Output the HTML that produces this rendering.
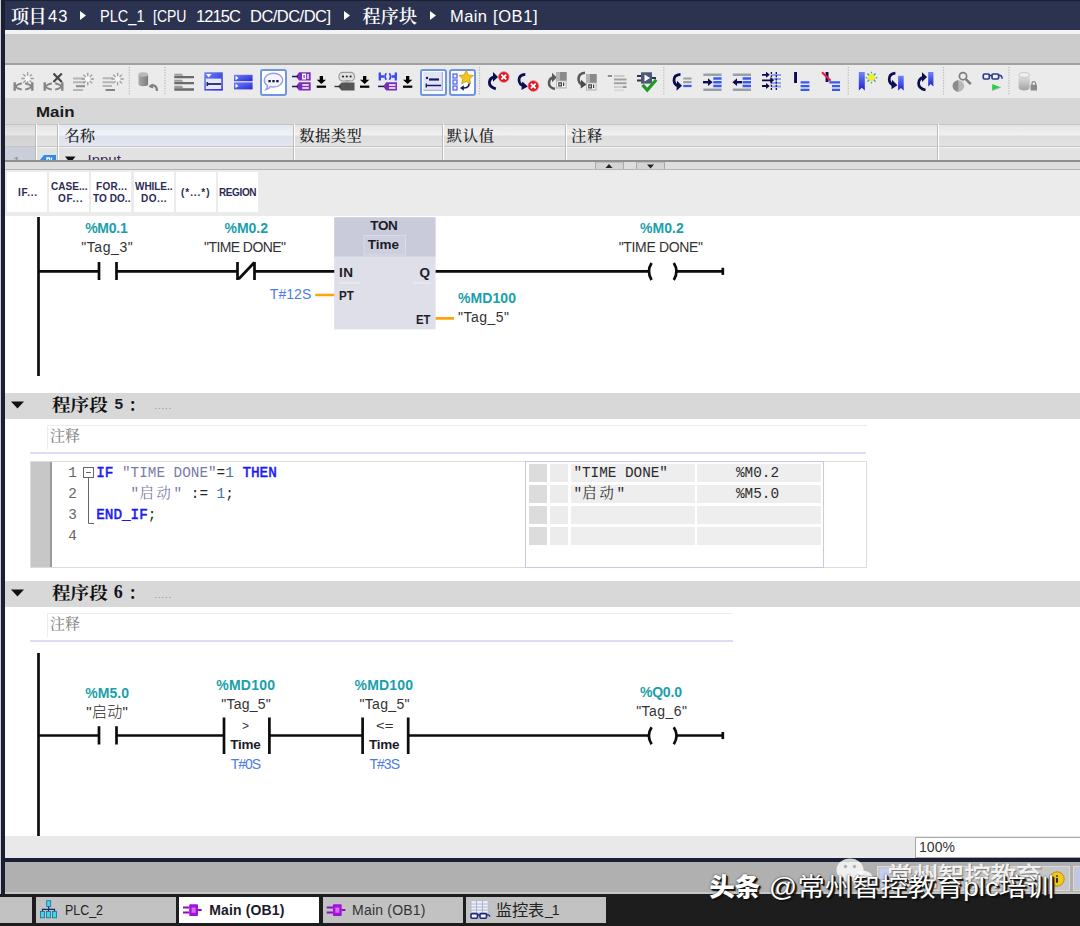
<!DOCTYPE html>
<html lang="zh-CN">
<head>
<meta charset="utf-8">
<title>Main [OB1]</title>
<style>
html,body{margin:0;padding:0;background:#fff;}
body{width:1080px;height:926px;overflow:hidden;position:relative;font-family:"Liberation Sans","Noto Sans CJK SC",sans-serif;color:#222;}
#root{position:absolute;left:0;top:0;width:1080px;height:926px;overflow:hidden;background:#fff;}
.abs{position:absolute;}
.t{position:absolute;white-space:pre;display:block;}
svg{position:absolute;overflow:visible;}
/* frame */
#titlebar{left:0;top:0;width:1080px;height:30px;background:#2c3350;border-top:1px solid #1b1f33;box-sizing:border-box;}
#band1{left:0;top:30px;width:1080px;height:35px;background:#cccccc;border-top:4px solid #f3f3f3;border-bottom:2px solid #a0a0a0;box-sizing:border-box;}
#toolbar{left:0;top:65px;width:1080px;height:33px;background:#ebebeb;}
#mainrow{left:0;top:98px;width:1080px;height:26px;background:#d7d7d7;}
#hdr{left:0;top:124px;width:1080px;height:23px;background:linear-gradient(#e4e4e4,#f1f1f1 45%,#dddddd 55%,#e3e3e3);border-top:1px solid #c4c4c4;border-bottom:1px solid #c6c6c6;box-sizing:border-box;}
#row1{left:0;top:147px;width:1080px;height:14px;background:#e2e2e2;border-top:1px solid #f3f3f3;box-sizing:border-box;}
#split{left:0;top:160px;width:1080px;height:10px;background:#dedede;border-top:2px solid #8f8f8f;border-bottom:1px solid #b5b5b5;box-sizing:border-box;}
#fav{left:0;top:170px;width:1080px;height:46px;background:#ebebeb;}
#leftedge{left:0;top:0;width:5px;height:894px;background:#1b1f33;border-left:1px solid #cfcfcf;box-sizing:border-box;}
.favb{position:absolute;top:172.200px;width:40px;height:39.800px;background:#fff;}
.vsep{position:absolute;top:124px;width:1px;height:36px;background:#fff;border-left:1px solid #bcbcbc;}
/* networks */
.nethdr{position:absolute;left:5px;width:1075px;height:26px;background:#d8d8d8;}
.cmt{position:absolute;left:47px;height:24px;border-top:1px solid #ececec;border-left:1px solid #ececec;box-sizing:border-box;}
.lav{position:absolute;left:30px;height:1.700px;background:#dcdcf5;}
/* bottom */
#botlight{left:5px;top:836px;width:1075px;height:22px;background:#e9e9e9;}
#botline{left:5px;top:858px;width:1075px;height:4px;background:#1b1f33;}
#botgray{left:5px;top:862px;width:1075px;height:32px;background:#b0b0b0;border-bottom:2px solid #c6c6c6;box-sizing:border-box;height:31.500px;}
#taskbar{left:0;top:894px;width:1080px;height:32px;background:#1d1d1d;}
.tab{position:absolute;top:897px;height:26px;background:#c2c2c2;}
</style>
</head>
<body>
<div id="root">
<!-- window frame -->
<div id="titlebar" class="abs"></div>
<div id="band1" class="abs"></div>
<div id="toolbar" class="abs"></div>
<div id="mainrow" class="abs"></div>
<div id="hdr" class="abs"></div>
<div id="row1" class="abs"></div>
<div id="split" class="abs"></div>
<div id="fav" class="abs"></div>
<svg width="1080" height="30" style="left:0;top:0"><g fill="#fff"><path d="M80 11l6 4.5-6 4.5z"/><path d="M344 11l6 4.5-6 4.5z"/><path d="M430 11l6 4.5-6 4.5z"/></g></svg>
<!-- interface table header -->
<div class="abs" style="left:5px;top:125px;width:30px;height:21px;background:linear-gradient(#dadada,#e6e6e6 45%,#d2d2d2 55%,#d8d8d8);"></div>
<div class="abs" style="left:58px;top:125px;width:236px;height:21px;background:linear-gradient(#e3e7ef,#f0f3f8 45%,#dde2ec 55%,#e2e6ee);"></div>
<div class="vsep" style="left:35px"></div>
<div class="vsep" style="left:57px"></div>
<div class="vsep" style="left:293px"></div>
<div class="vsep" style="left:442px"></div>
<div class="vsep" style="left:565px"></div>
<div class="vsep" style="left:937px"></div>
<div class="abs" style="left:5px;top:147px;width:30px;height:13px;background:#c9ced8;"></div>
<!-- splitter arrows -->
<div class="abs" style="left:595px;top:162px;width:29px;height:7px;background:#d4d4d4;border:1px solid #a9a9a9;border-top-color:#bdbdbd;border-bottom:none;box-sizing:border-box;"></div>
<div class="abs" style="left:636px;top:162px;width:29px;height:7px;background:#d4d4d4;border:1px solid #a9a9a9;border-top-color:#bdbdbd;border-bottom:none;box-sizing:border-box;"></div>
<svg width="80" height="8" style="left:590px;top:162px"><path d="M15.5 6l3.5-4 3.500 4z" fill="#222"/><path d="M57 2.500l3.500 4 3.500-4z" fill="#222"/></svg>
<!-- SCL favourites buttons -->
<div class="favb" style="left:7.200px"></div>
<div class="favb" style="left:49.300px"></div>
<div class="favb" style="left:91.400px"></div>
<div class="favb" style="left:133.500px"></div>
<div class="favb" style="left:175.600px"></div>
<div class="favb" style="left:217.700px"></div>
<!-- row 1 (clipped by splitter) -->
<div class="abs" style="left:5px;top:147px;width:1075px;height:13px;overflow:hidden;">
 <span class="t" style="left:8px;top:7px;font-size:13px;line-height:16px;color:#8d8d8d;">1</span>
 <svg width="18" height="12" style="left:34px;top:6.500px"><path d="M0.500 6.500L5 1h12v11H5z" fill="#2f8be6"/><path d="M8 4h2.500v5H8zM12.500 3.500v6" stroke="#fff" stroke-width="1.300" fill="none"/></svg>
 <svg width="14" height="8" style="left:59px;top:9px"><path d="M1 0.500h10.500L6.250 7z" fill="#111"/></svg>
 <span class="t" style="left:82.500px;top:4px;font-size:15px;line-height:18px;color:#3a2a5a;">Input</span>
</div>
<!-- toolbar icons -->
<div class="abs" style="left:260px;top:68.500px;width:27px;height:27px;background:#fff;border:2px solid #6e96e2;border-radius:3px;box-sizing:border-box;"></div>
<div class="abs" style="left:419.500px;top:68.500px;width:27px;height:27px;background:#fafbff;border:2px solid #6e96e2;border-radius:3px;box-sizing:border-box;"></div>
<div class="abs" style="left:449px;top:68.500px;width:27px;height:27px;background:#fafbff;border:2px solid #6e96e2;border-radius:3px;box-sizing:border-box;"></div>
<svg width="1080" height="34" viewBox="0 64 1080 34" style="left:0;top:64px">
<defs>
 <linearGradient id="gb" x1="0" y1="0" x2="1" y2="1"><stop offset="0" stop-color="#6f82f6"/><stop offset="1" stop-color="#2a2ad6"/></linearGradient>
 <linearGradient id="gbk" x1="0" y1="0" x2="0" y2="1"><stop offset="0" stop-color="#6f86fa"/><stop offset="1" stop-color="#1f1fcc"/></linearGradient>
 <linearGradient id="gcy" x1="0" y1="0" x2="1" y2="0"><stop offset="0" stop-color="#a9a9a9"/><stop offset="1" stop-color="#7b7b7b"/></linearGradient>
 <linearGradient id="gcy2" x1="0" y1="0" x2="0" y2="1"><stop offset="0" stop-color="#e4e4e4"/><stop offset="1" stop-color="#a4a4a4"/></linearGradient>
 <g id="burst"><circle r="3.600" fill="#f6f6f6"/><path d="M0-6.200V-2.800M0 2.800V6.200M-6.200 0H-2.800M2.800 0H6.200M-4.400-4.400L-2-2M2 2L4.400 4.400M-4.400 4.400L-2 2M2-2L4.400-4.400" stroke="#9c9c9c" stroke-width="1.300"/></g>
 <g id="contact" stroke="#858585" fill="none"><path d="M1.200 0V8.500M18.800 0V8.500" stroke-width="2.400"/><path d="M8.300 1.100Q-3.300 4.250 8.300 7.400M11.700 1.100Q23.300 4.250 11.700 7.400" stroke-width="2"/></g>
 <g id="dl" fill="#000"><path d="M3 0h3.300v3.800h3L4.650 8 0 3.800h3z"/><rect x="0" y="9.600" width="9.300" height="2.200"/></g>
 <g id="redx"><circle r="5.300" fill="#d81824"/><circle r="5.300" fill="none" stroke="#f06a70" stroke-width=".8"/><path d="M-2.400-2.400L2.400 2.400M2.400-2.400L-2.400 2.400" stroke="#fff" stroke-width="1.900"/></g>
 <g id="doc"><rect x="0" y="0" width="10.600" height="16.500" fill="#b4b4b4"/><rect x="4" y="0" width="6.600" height="8.500" fill="#8a8a8a"/><rect x="1" y="9.300" width="8.600" height="6" fill="#f2f2f2"/><path d="M2.800 10.800h2.600v3h-2.600zM7.600 10.500v3.600" stroke="#444" stroke-width="1.200" fill="none"/></g>
</defs>
<!-- 1-4 disabled insert icons -->
<use href="#contact" x="13.500" y="82.200"/><use href="#burst" x="27.600" y="78.500"/>
<use href="#contact" x="43.500" y="82.200"/><path d="M53.500 73.500L61.800 82M61.800 73.500L53.500 82" stroke="#474747" stroke-width="2.200"/>
<g stroke="#b5b5b5" stroke-width="2"><path d="M73 78.500H85M73 82.200H85M73 90H83"/><path d="M76 86.200H85" stroke="#8c8c8c"/></g><use href="#burst" x="87.800" y="79"/>
<g stroke="#b5b5b5" stroke-width="2"><path d="M102.600 78.300H113M102.600 82.200H113M102.600 86H112"/><path d="M105.500 90H115" stroke="#858585"/></g><use href="#burst" x="117.600" y="79"/>
<!-- separators -->
<g stroke="#bdbdbd" stroke-width="1.200" stroke-dasharray="1.300 1.300"><path d="M129.300 67V95M165 67V95M479.500 67V95M663.800 67V95M848.300 67V95M943.500 67V95M1008.900 67V95"/></g>
<!-- 5 cylinder+undo -->
<path d="M138.500 74.500v9.500a4.800 2.200 0 0 0 9.600 0v-9.500z" fill="url(#gcy)"/><ellipse cx="143.300" cy="74.500" rx="4.800" ry="2.200" fill="#b9b9b9"/>
<path d="M150 86.500Q156.500 83 157 91" fill="none" stroke="#7d7d7d" stroke-width="2.200"/><path d="M148.500 86.800l4-3.200.8 4.800z" fill="#7d7d7d"/>
<!-- 6 gray lines -->
<g fill="#9b9b9b"><path d="M174.300 73.800h7.500l1.500 2h-9z"/><path d="M174.300 79.800h7.500l1.500 2h-9z"/><path d="M174.300 85.800h7.500l1.500 2.300h-9z"/></g>
<g stroke="#6a6a6a" stroke-width="2.300"><path d="M174.300 77.200H194M174.300 83.200H194M174.300 89.500H194"/></g>
<!-- 7 open box -->
<rect x="204.300" y="72.300" width="18.500" height="18.300" fill="url(#gb)"/><rect x="205.800" y="78.600" width="15.500" height="10.400" fill="#e3e8fb"/><path d="M206 74h5.500l-2.750 3.400z" fill="#fff"/><path d="M207.300 84h13.800" stroke="#24245c" stroke-width="1.800"/><path d="M207.300 82v4" stroke="#24245c" stroke-width="1.600"/>
<!-- 8 collapsed -->
<rect x="234" y="74.800" width="18.600" height="6.400" fill="url(#gb)"/><rect x="234" y="82.400" width="18.600" height="7" fill="url(#gb)"/><path d="M235.500 75.800l3 2.200-3 2.200zM235.500 83.700l3 2.200-3 2.200z" fill="#fff"/>
<!-- 9 speech bubble -->
<path d="M273.500 73.300c5.200 0 9.200 2.900 9.200 6.800s-4 6.900-9.200 6.900c-1.200 0-2.200-.1-3.200-.4-1 1.700-2.500 2.700-4.300 3 1-1.100 1.500-2.500 1.400-3.900-1.900-1.300-3.100-3.300-3.100-5.600 0-3.900 4-6.800 9.200-6.800z" fill="#f4f4ff" stroke="#9c9cf0" stroke-width="1.500"/>
<g fill="#1a1a3a"><rect x="268.400" y="80" width="2.400" height="2.300"/><rect x="272.300" y="80" width="2.400" height="2.300"/><rect x="276.200" y="80" width="2.400" height="2.300"/></g>
<!-- 10 purple tags + download -->
<g fill="#7a2fb8"><path d="M296 76.500l3-4.200h11.700v8.300H299z"/><path d="M296 86.500l3-4.200h11.700v8.300H299z"/></g>
<path d="M292 76.500h6M292 86.500h6" stroke="#1a1a5a" stroke-width="1.500"/>
<g stroke="#fff" stroke-width="1.400" fill="none"><path d="M302.800 74.300h2.600v4.400h-2.600zM308 74v5M302.300 85h6.500M302.300 88h6.500"/></g>
<use href="#dl" x="316.700" y="76"/>
<!-- 11 gray bubble/tag + download -->
<rect x="339" y="72.300" width="15.500" height="8.700" rx="4" fill="#e2e2e2" stroke="#9a9a9a" stroke-width="1.200"/><path d="M349 80.500l-3.500 4 .5-4z" fill="#e2e2e2" stroke="#9a9a9a" stroke-width="1"/>
<g fill="#222"><circle cx="343" cy="76.500" r="1.100"/><circle cx="346.800" cy="76.500" r="1.100"/><circle cx="350.600" cy="76.500" r="1.100"/></g>
<path d="M338 86.500l3.500-4h13v8h-13z" fill="#555"/><path d="M334.500 86.500h6" stroke="#333" stroke-width="1.400"/>
<use href="#dl" x="360" y="76"/>
<!-- 12 blue contact + purple tag + download -->
<g stroke="#3a48f0" stroke-width="2.300" fill="none"><path d="M379.800 72.600V80.400M379.800 76.500H384M395.800 72.600V80.400M391.600 76.500H395.800"/><path d="M386.300 73.300Q383.800 76.500 386.300 79.700M389.300 73.300Q391.800 76.500 389.300 79.700" stroke-width="1.800"/></g>
<path d="M383.200 86.400l3-4.100H397v8.200h-10.800z" fill="#7a2fb8"/><path d="M378 86.400h6" stroke="#1a1a5a" stroke-width="1.500"/><path d="M389 85h6.500M389 88h6.500" stroke="#fff" stroke-width="1.400"/>
<use href="#dl" x="403" y="76"/>
<!-- 13 -->
<rect x="423.400" y="72" width="19" height="18.400" fill="#dfe4f8"/><path d="M442.400 72v18.400H423.400" fill="none" stroke="#aab1d6" stroke-width="1.200"/>
<circle cx="427" cy="78" r="1.200" fill="#1a1a5a"/><path d="M429 79.500h10" stroke="#1a1a5a" stroke-width="2.200"/><path d="M426.300 85.500h14.800M426.300 83.500v4" stroke="#1a1a5a" stroke-width="1.400"/>
<!-- 14 -->
<g fill="#eef0ff" stroke="#5a6ae6" stroke-width="1.300"><rect x="453" y="74" width="4" height="4"/><rect x="453" y="80" width="4" height="4"/><rect x="453" y="86" width="4" height="4"/></g>
<path d="M466.200 70.300l2.100 4.700 5.100.5-3.800 3.400 1.100 5-4.500-2.600-4.500 2.600 1.100-5-3.800-3.400 5.100-.5z" fill="#f2c41e" stroke="#c79a10" stroke-width=".8"/>
<path d="M469 83.500q.5 4.500-6 4.500" fill="none" stroke="#1a1a5a" stroke-width="1.600"/><path d="M460 88l3.800-2.700v5.400z" fill="#1a1a5a"/>
<!-- 15 -->
<path d="M495.800 88.800Q489 87 489.400 82.200Q490 77.500 494.500 77" fill="none" stroke="#0c0c52" stroke-width="2.800"/><path d="M493 72l5 4.900-5 4.900z" fill="#0c0c52"/><use href="#redx" x="503.800" y="77"/>
<!-- 16 -->
<path d="M525.300 74.400Q519 74.800 519 80Q519.300 84.500 523.500 86" fill="none" stroke="#0c0c52" stroke-width="2.800"/><path d="M522.300 81.500l5.600 5-6.500 3.500z" fill="#0c0c52"/><use href="#redx" x="533.300" y="86"/>
<!-- 17 -->
<path d="M555 89Q548.500 87.500 549 82.500Q549.500 78 553.500 77.500" fill="none" stroke="#5a5a5a" stroke-width="2.600"/><path d="M552 72.800l4.800 4.700-4.800 4.700z" fill="#5a5a5a"/><use href="#doc" x="556" y="72"/>
<!-- 18 -->
<path d="M585 72.800Q578.500 73.500 578.500 79Q578.800 83.500 582.500 85" fill="none" stroke="#5a5a5a" stroke-width="2.600"/><path d="M581 79.800l5.500 4.700-5.800 4z" fill="#4a4a4a"/><use href="#doc" x="586" y="74"/>
<!-- 19 -->
<rect x="607.800" y="75" width="4.200" height="2" fill="#8e8e8e"/><g stroke-width="2"><path d="M614 76H624.500" stroke="#c9c9c9"/><path d="M614 79.600H626.500M614 83.200H626.500" stroke="#a2a2a2"/><path d="M614 87H623" stroke="#cdcdcd"/><path d="M623 87H626.500" stroke="#999"/><path d="M614 90.300H624" stroke="#d9d9d9"/></g>
<!-- 20 chip + check -->
<path d="M637 76h4M637 80.500h4M652 78h4" stroke="#2d3550" stroke-width="1.800"/><rect x="641" y="72.300" width="11" height="11.300" fill="#4d5876"/><path d="M644.500 74.500l5.500 3.500-5.500 3.500z" fill="#fff"/>
<path d="M642.500 84.800L647.300 90L656.200 79.800" fill="none" stroke="#1f9a22" stroke-width="3.200"/>
<!-- 21 -->
<path d="M680.500 74.400Q673.800 74.800 674 80.300Q674.300 84.500 678 85.800" fill="none" stroke="#0c0c52" stroke-width="2.800"/><path d="M677 80.800l5 5-5.500 5z" fill="#0c0c52"/>
<g stroke-width="2.200"><path d="M683.300 78.500H691.600M683.300 82.200H691.600" stroke="#9aa0a8"/><path d="M683.300 86H691.600" stroke="#3a5af0"/></g>
<!-- 22 -->
<g stroke-width="2.400"><path d="M703.300 74.800H721.600M703.300 89.800H721.600" stroke="#9aa0a8"/><path d="M713.300 78.500H721.600M713.300 82.200H721.600M713.300 86H721.600" stroke="#3a5af0"/></g>
<path d="M703 82.200h6" stroke="#0c0c52" stroke-width="2.400"/><path d="M708 78.300l4.600 3.900-4.600 3.900z" fill="#0c0c52"/>
<!-- 23 -->
<g stroke-width="2.400"><path d="M732.800 74.800H751M732.800 89.800H751" stroke="#9aa0a8"/><path d="M742.600 78.500H751M742.600 82.200H751M742.600 86H751" stroke="#3a5af0"/></g>
<path d="M736 82.200h6" stroke="#0c0c52" stroke-width="2.400"/><path d="M737 78.300l-4.600 3.900 4.600 3.900z" fill="#0c0c52"/>
<!-- 24 -->
<g stroke="#8ea2f2" stroke-width="2"><path d="M771.500 75H781M771.500 79H781M771.500 83H781M771.500 86.500H781"/></g>
<g stroke="#0c0c52" stroke-width="1.300" stroke-dasharray="2 1.200"><path d="M771.400 72V91M776.300 72V91"/></g>
<g stroke="#0c0c52" stroke-width="1.800"><path d="M762 74.800h5M762 80.300h9M762 86h5"/></g><g fill="#0c0c52"><path d="M766 71.800l3.800 3-3.800 3zM770.300 77.300l3.800 3-3.800 3zM766 83l3.800 3-3.800 3z"/></g>
<!-- 25 -->
<rect x="794.100" y="72" width="2.900" height="11" fill="#0c0c52"/><g stroke="#3a5af0" stroke-width="2.300"><path d="M800.600 82.300H809.400M800.600 86.100H809.400M800.600 89.900H809.400"/></g>
<!-- 26 -->
<rect x="825.600" y="72" width="2.900" height="10" fill="#0c0c52"/><path d="M822 72.300L830.700 80.800" stroke="#e8203a" stroke-width="2.200"/><g stroke="#3a5af0" stroke-width="2.300"><path d="M829.300 82.300H840M832 86.100H840M832 89.900H840"/></g>
<!-- 27 -->
<path d="M858.800 72h6v18.500l-3-2.800-3 2.800z" fill="url(#gbk)"/>
<g stroke="#2f9c9c" stroke-width="1.200"><path d="M871.500 71.800v11.600M865.700 77.600h11.600M867.400 73.500l8.200 8.200M875.600 73.500l-8.200 8.200"/></g><circle cx="871.500" cy="77.600" r="3" fill="#f4f020"/><path d="M871.500 73v9.200M866.900 77.600h9.200" stroke="#f4f020" stroke-width="1.200"/>
<!-- 28 -->
<path d="M895.400 73.200Q889 73.800 889.200 79.500Q889.500 83.800 893 85" fill="none" stroke="#0c0c52" stroke-width="2.700"/><path d="M892 79.800l5.400 5.400-6 4z" fill="#0c0c52"/><path d="M898.100 75.700h5.600v14.800l-2.800-2.600-2.800 2.600z" fill="url(#gbk)"/>
<!-- 29 -->
<path d="M925.500 90Q918.300 88.500 918.600 83Q919 78 923.500 77.300" fill="none" stroke="#0c0c52" stroke-width="2.700"/><path d="M922 72.300l5 4.800-5 4.800z" fill="#0c0c52"/><path d="M928.200 72h5.200v14.400l-2.600-2.400-2.600 2.400z" fill="url(#gbk)"/>
<!-- 30 -->
<circle cx="958.400" cy="86" r="5.800" fill="#b9b9b9"/><path d="M958.400 80.200a5.800 5.800 0 0 0 0 11.600z" fill="#8b8b8b"/>
<circle cx="963" cy="76.200" r="3.600" fill="#ececec" stroke="#7d7d7d" stroke-width="1.700"/><path d="M965.800 79.200l5 5" stroke="#7d7d7d" stroke-width="2.600"/>
<!-- 31 -->
<g fill="#f4f4fa" stroke="#2a388e" stroke-width="1.700"><rect x="983.300" y="74" width="6" height="5" rx="1.200"/><rect x="992" y="74" width="6.600" height="5" rx="1.200"/></g><path d="M989.300 75.500h2.700M998.600 75.200q3.400-.4 3.600 3.600" fill="none" stroke="#2a388e" stroke-width="1.500"/>
<path d="M992.200 84l8.500 3.200-8.500 3.400z" fill="#22d23e"/><path d="M992.200 90.400l8.500-3.200" stroke="#9aa6c0" stroke-width="1"/>
<!-- 32 -->
<path d="M1018.600 75v12.800a5.550 2.600 0 0 0 11.100 0V75z" fill="url(#gcy2)"/><ellipse cx="1024.150" cy="75" rx="5.550" ry="2.500" fill="#ededed" stroke="#c2c2c2" stroke-width=".8"/>
<rect x="1030.600" y="84.800" width="6.400" height="5.700" fill="#8a8a8a"/><path d="M1032 85v-1.600a1.800 1.800 0 0 1 3.600 0V85" fill="none" stroke="#8a8a8a" stroke-width="1.300"/>
</svg>
<!-- network headers -->
<div class="nethdr" style="top:393px"></div>
<div class="nethdr" style="top:581px"></div>
<svg width="30" height="10" style="left:8px;top:400px"><path d="M3 1.500h13l-6.500 7z" fill="#111"/></svg>
<svg width="30" height="10" style="left:8px;top:588px"><path d="M3 1.500h13l-6.500 7z" fill="#111"/></svg>
<div class="cmt" style="top:425px;width:820px"></div>
<div class="lav" style="top:452.200px;width:836px"></div>
<div class="cmt" style="top:613px;width:686px"></div>
<div class="lav" style="top:640.300px;width:703px"></div>
<!-- ladder graphics -->
<svg width="1080" height="926" viewBox="0 0 1080 926" style="left:0;top:0">
 <rect x="334.200" y="217.200" width="101.400" height="40" fill="#c9cbdb"/>
 <rect x="334.200" y="256.500" width="101.400" height="72.900" fill="#dedfe9"/>
 <rect x="364" y="235.500" width="41.500" height="19.500" fill="#cdcfde" stroke="#d9dbe7" stroke-width="1"/>
 <path d="M339 283h21M413 283h18" stroke="#f1f2f7" stroke-width="1.200"/>
 <g stroke="#0c0c0c" stroke-width="2.700" fill="none">
  <!-- network 4 -->
  <path d="M38.500 217V376"/>
  <path d="M38.500 271.400H99M116.500 271.400H237.500M254.500 271.400H334.300M435.600 271.400H649M676.400 271.400H723"/>
  <path d="M99 262V280M116.500 262V280M237.500 262V280M254.500 262V280M238.700 279L254.300 262.500"/>
  <path d="M651.600 263Q646.200 271.400 651.600 280M673.800 263Q679.200 271.400 673.800 280"/>
  <path d="M722.800 267.800V274.900"/>
  <!-- network 6 -->
  <path d="M38.500 653V836"/>
  <path d="M38.500 735.500H99M116.500 735.500H223.700M269.500 735.500H362.500M408.200 735.500H649M676.400 735.500H723"/>
  <path d="M99 726.300V744.500M116.500 726.300V744.500"/>
  <path d="M224 717.500V754M269.400 717.500V754M362.600 717.500V754M408.200 717.500V754"/>
  <path d="M651.600 727.200Q646.200 735.500 651.600 744.200M673.800 727.200Q679.200 735.500 673.800 744.200"/>
  <path d="M722.800 732V739.100"/>
 </g>
 <path d="M315.200 295.050H334.300M435.600 318.400H454" stroke="#ffa30a" stroke-width="2.600"/>
</svg>
<!-- SCL network 5 -->
<div class="abs" style="left:30px;top:461px;width:837px;height:107px;border:1px solid #dcdcdc;box-sizing:border-box;background:#fff;"></div>
<div class="abs" style="left:31px;top:462px;width:21px;height:105px;background:#c7c7c7;border-right:2px solid #9a9a9a;box-sizing:border-box;"></div>
<svg width="20" height="70" style="left:80px;top:462px"><g fill="none" stroke="#666" stroke-width="1"><rect x="3.500" y="5.500" width="10" height="10" fill="#fff"/><path d="M6 10.500h5M8.500 15.500V61.500H14"/></g></svg>
<div class="abs" style="left:525px;top:461px;width:299px;height:107px;border:1px solid #c6c6ee;box-sizing:border-box;"></div>
<div class="abs" style="left:528.500px;top:463.500px;width:18px;height:18px;background:#dcdcdc"></div>
<div class="abs" style="left:549.500px;top:463.500px;width:18px;height:18px;background:#ececec"></div>
<div class="abs" style="left:570.500px;top:463.500px;width:124px;height:18px;background:#eeeeee"></div>
<div class="abs" style="left:697px;top:463.500px;width:123.500px;height:18px;background:#eeeeee"></div>
<div class="abs" style="left:528.500px;top:484.500px;width:18px;height:18px;background:#dcdcdc"></div>
<div class="abs" style="left:549.500px;top:484.500px;width:18px;height:18px;background:#ececec"></div>
<div class="abs" style="left:570.500px;top:484.500px;width:124px;height:18px;background:#eeeeee"></div>
<div class="abs" style="left:697px;top:484.500px;width:123.500px;height:18px;background:#eeeeee"></div>
<div class="abs" style="left:528.500px;top:505.800px;width:18px;height:18px;background:#dcdcdc"></div>
<div class="abs" style="left:549.500px;top:505.800px;width:18px;height:18px;background:#ececec"></div>
<div class="abs" style="left:570.500px;top:505.800px;width:124px;height:18px;background:#eeeeee"></div>
<div class="abs" style="left:697px;top:505.800px;width:123.500px;height:18px;background:#eeeeee"></div>
<div class="abs" style="left:528.500px;top:526.800px;width:18px;height:18px;background:#dcdcdc"></div>
<div class="abs" style="left:549.500px;top:526.800px;width:18px;height:18px;background:#ececec"></div>
<div class="abs" style="left:570.500px;top:526.800px;width:124px;height:18px;background:#eeeeee"></div>
<div class="abs" style="left:697px;top:526.800px;width:123.500px;height:18px;background:#eeeeee"></div>
<!-- bottom area -->
<div id="botlight" class="abs"></div>
<div class="abs" style="left:915px;top:837px;width:170px;height:21px;background:#fff;border:1px solid #a8a8a8;box-sizing:border-box;"></div>
<div id="botline" class="abs"></div>
<div id="botgray" class="abs"></div>
<div id="taskbar" class="abs"></div>
<div class="tab" style="left:0;width:32px"></div>
<div class="tab" style="left:36px;width:140px"></div>
<div class="tab" style="left:179px;width:140px;background:#fff"></div>
<div class="tab" style="left:323px;width:140px"></div>
<div class="tab" style="left:466px;width:140px"></div>
<!-- status bar fragments -->
<div class="abs" style="left:877px;top:866px;width:193px;height:25px;background:#c7c7c7;border:1px solid #d9d9d9;box-sizing:border-box;"></div>
<div class="abs" style="left:880px;top:869px;width:10px;height:18px;background:#c5cdf0;"></div>
<div class="abs" style="left:1073px;top:866px;width:10px;height:25px;background:#c7c7c7;border:1px solid #d9d9d9;box-sizing:border-box;"></div>
<div class="abs" style="left:1076px;top:869px;width:6px;height:18px;background:#bcc6ee;"></div>
<svg width="16" height="16" style="left:1048.700px;top:870.800px"><circle cx="8" cy="8" r="7.200" fill="#f2c81c" stroke="#b8930a" stroke-width="1"/><path d="M8 4.200v1.600M8 7v4.800" stroke="#222" stroke-width="1.800"/></svg>
<svg width="40" height="32" style="left:835.500px;top:857.500px" viewBox="0 0 40 32"><g fill="rgba(255,255,255,.8)"><ellipse cx="14" cy="12" rx="13.500" ry="11.500"/><ellipse cx="27" cy="21.500" rx="10.500" ry="9"/></g><g fill="#b1b1b1"><circle cx="9.500" cy="8.500" r="1.700"/><circle cx="18.500" cy="8.500" r="1.700"/></g></svg>
<!-- tab icons -->
<svg width="1080" height="32" viewBox="0 894 1080 32" style="left:0;top:894px">
 <defs>
  <g id="ob"><rect x="6.200" y="0" width="8.800" height="11.700" rx="1" fill="#a312dc"/><rect x="8.600" y="3.200" width="4" height="5.300" fill="#cf6ff2"/><path d="M0 3.300h6.200M0 8.300h6.200M15 5.800h3.700" stroke="#8a0ec2" stroke-width="2"/></g>
 </defs>
 <!-- PLC_2 network icon -->
 <g stroke="#1a2a6a" stroke-width="1.200" fill="none"><path d="M48.700 906.500V909.300M42.500 911.500V909.300H54.500V911.500M48.500 909.300V911.500"/></g>
 <g fill="#3fd6ea" stroke="#1a6a9a" stroke-width=".8"><rect x="46.700" y="900.700" width="4" height="5.800"/><rect x="40.500" y="911.500" width="4" height="6.300"/><rect x="46.500" y="911.500" width="4" height="6.300"/><rect x="52.500" y="911.500" width="4" height="6.300"/></g>
 <use href="#ob" x="183" y="904.300"/>
 <use href="#ob" x="326.700" y="904.300"/>
 <!-- watch table icon -->
 <rect x="471" y="900.700" width="17.300" height="12.300" fill="#eef1f8" stroke="#b4bdd2" stroke-width="1"/>
 <g stroke="#aab4cc" stroke-width="1"><path d="M471 904H488.300M471 907H488.300M471 910H488.300M476.500 900.700V913M482.500 900.700V913"/></g>
 <g fill="#f4f4fa" stroke="#1c2a80" stroke-width="1.600"><rect x="471" y="913.600" width="6.500" height="4.600" rx="1.200"/><rect x="480" y="913.600" width="6.500" height="4.600" rx="1.200"/></g><path d="M477.500 915h2.500M486.500 914.600q3-.2 3.400 2" fill="none" stroke="#1c2a80" stroke-width="1.300"/>
</svg>

<!-- text -->
<span class="t" style="left:11.00px;top:4.56px;font-size:18px;line-height:24px;color:#ffffff;font-family:'Liberation Sans','Noto Serif CJK SC',serif;font-weight:500;letter-spacing:-0.500px;font-weight:600;">项目</span>
<span class="t" style="left:48.00px;top:4.78px;font-size:16.5px;line-height:22px;color:#ffffff;letter-spacing:1.141px;">43</span>
<span class="t" style="left:100.00px;top:4.78px;font-size:16.5px;line-height:22px;color:#ffffff;transform:scaleX(0.8820);transform-origin:0 0;">PLC_1</span>
<span class="t" style="left:152.50px;top:4.78px;font-size:16.5px;line-height:22px;color:#ffffff;transform:scaleX(0.8498);transform-origin:0 0;">[CPU</span>
<span class="t" style="left:196.00px;top:4.78px;font-size:16.5px;line-height:22px;color:#ffffff;letter-spacing:-0.906px;">1215C</span>
<span class="t" style="left:250.00px;top:4.78px;font-size:16.5px;line-height:22px;color:#ffffff;letter-spacing:-0.531px;">DC/DC/DC]</span>
<span class="t" style="left:362.50px;top:4.56px;font-size:18px;line-height:24px;color:#ffffff;font-family:'Liberation Sans','Noto Serif CJK SC',serif;font-weight:500;letter-spacing:0.250px;font-weight:600;">程序块</span>
<span class="t" style="left:450.00px;top:4.78px;font-size:16.5px;line-height:22px;color:#ffffff;letter-spacing:0.411px;">Main</span>
<span class="t" style="left:493.00px;top:4.78px;font-size:16.5px;line-height:22px;color:#ffffff;letter-spacing:0.578px;">[OB1]</span>
<span class="t" style="left:36.00px;top:100.50px;font-size:15px;line-height:21px;color:#1a1a1a;font-weight:bold;transform:scaleX(1.1267);transform-origin:0 0;">Main</span>
<span class="t" style="left:64.50px;top:124.70px;font-size:15.3px;line-height:21px;color:#222;font-family:'Liberation Sans','Noto Serif CJK SC',serif;font-weight:500;letter-spacing:-0.109px;">名称</span>
<span class="t" style="left:299.30px;top:124.70px;font-size:15.3px;line-height:21px;color:#222;font-family:'Liberation Sans','Noto Serif CJK SC',serif;font-weight:500;letter-spacing:0.399px;">数据类型</span>
<span class="t" style="left:446.70px;top:124.70px;font-size:15.3px;line-height:21px;color:#222;font-family:'Liberation Sans','Noto Serif CJK SC',serif;font-weight:500;letter-spacing:0.697px;">默认值</span>
<span class="t" style="left:571.00px;top:124.70px;font-size:15.3px;line-height:21px;color:#222;font-family:'Liberation Sans','Noto Serif CJK SC',serif;font-weight:500;letter-spacing:0.691px;">注释</span>
<span class="t" style="left:18.00px;top:184.53px;font-size:10px;line-height:16px;color:#2b2b55;font-weight:bold;letter-spacing:0.719px;">IF...</span>
<span class="t" style="left:51.00px;top:178.53px;font-size:10px;line-height:16px;color:#2b2b55;font-weight:bold;letter-spacing:0.062px;">CASE...</span>
<span class="t" style="left:58.00px;top:190.73px;font-size:10px;line-height:16px;color:#2b2b55;font-weight:bold;letter-spacing:0.844px;">OF...</span>
<span class="t" style="left:96.00px;top:178.53px;font-size:10px;line-height:16px;color:#2b2b55;font-weight:bold;letter-spacing:0.309px;">FOR...</span>
<span class="t" style="left:93.00px;top:190.73px;font-size:10px;line-height:16px;color:#2b2b55;font-weight:bold;letter-spacing:0.076px;">TO DO..</span>
<span class="t" style="left:135.00px;top:178.53px;font-size:10px;line-height:16px;color:#2b2b55;font-weight:bold;letter-spacing:-0.047px;">WHILE..</span>
<span class="t" style="left:141.00px;top:190.73px;font-size:10px;line-height:16px;color:#2b2b55;font-weight:bold;letter-spacing:0.539px;">DO...</span>
<span class="t" style="left:181.00px;top:184.53px;font-size:10px;line-height:16px;color:#2b2b55;font-weight:bold;letter-spacing:0.953px;">(*...*)</span>
<span class="t" style="left:219.00px;top:184.53px;font-size:10px;line-height:16px;color:#2b2b55;font-weight:bold;letter-spacing:-0.391px;">REGION</span>
<span class="t" style="left:85.20px;top:218.45px;font-size:14px;line-height:20px;color:#1aa0aa;font-weight:bold;letter-spacing:-0.270px;">%M0.1</span>
<span class="t" style="left:81.30px;top:236.75px;font-size:14px;line-height:20px;color:#333333;letter-spacing:0.551px;">&quot;Tag_3&quot;</span>
<span class="t" style="left:224.50px;top:218.45px;font-size:14px;line-height:20px;color:#1aa0aa;font-weight:bold;letter-spacing:-0.020px;">%M0.2</span>
<span class="t" style="left:204.00px;top:236.75px;font-size:14px;line-height:20px;color:#333333;letter-spacing:-0.572px;">&quot;TIME DONE&quot;</span>
<span class="t" style="left:370.30px;top:216.02px;font-size:13.5px;line-height:20px;color:#1c1c28;font-weight:bold;letter-spacing:-0.383px;">TON</span>
<span class="t" style="left:367.80px;top:234.52px;font-size:13.5px;line-height:20px;color:#1c1c28;font-weight:bold;letter-spacing:-0.055px;">Time</span>
<span class="t" style="left:339.10px;top:262.92px;font-size:13.5px;line-height:20px;color:#1c1c28;font-weight:bold;letter-spacing:0.500px;">IN</span>
<span class="t" style="left:419.40px;top:262.92px;font-size:13.5px;line-height:20px;color:#1c1c28;font-weight:bold;">Q</span>
<span class="t" style="left:339.10px;top:286.42px;font-size:13.5px;line-height:20px;color:#1c1c28;font-weight:bold;transform:scaleX(0.8572);transform-origin:0 0;">PT</span>
<span class="t" style="left:416.10px;top:310.02px;font-size:13.5px;line-height:20px;color:#1c1c28;font-weight:bold;transform:scaleX(0.8398);transform-origin:0 0;">ET</span>
<span class="t" style="left:269.80px;top:284.15px;font-size:14px;line-height:20px;color:#4d7ce2;letter-spacing:0.062px;">T#12S</span>
<span class="t" style="left:458.00px;top:288.45px;font-size:14px;line-height:20px;color:#1aa0aa;font-weight:bold;letter-spacing:0.081px;">%MD100</span>
<span class="t" style="left:458.00px;top:306.85px;font-size:14px;line-height:20px;color:#333333;letter-spacing:0.484px;">&quot;Tag_5&quot;</span>
<span class="t" style="left:640.00px;top:218.45px;font-size:14px;line-height:20px;color:#1aa0aa;font-weight:bold;letter-spacing:0.030px;">%M0.2</span>
<span class="t" style="left:618.70px;top:236.75px;font-size:14px;line-height:20px;color:#333333;letter-spacing:-0.342px;">&quot;TIME DONE&quot;</span>
<span class="t" style="left:52.30px;top:394.35px;font-size:16.6px;line-height:23px;color:#111;font-family:'Liberation Sans','Noto Serif CJK SC',serif;font-weight:bold;transform:scaleX(1.1189);transform-origin:0 0;">程序段</span>
<span class="t" style="left:114.40px;top:393.03px;font-size:15.5px;line-height:22px;color:#1a1a2a;font-weight:bold;">5</span>
<span class="t" style="left:128.30px;top:393.95px;font-size:16.6px;line-height:23px;color:#111;font-family:'Liberation Sans','Noto Serif CJK SC',serif;font-weight:bold;">：</span>
<span class="t" style="left:154.00px;top:399.38px;font-size:9px;line-height:15px;color:#9c9cb4;transform:scaleX(1.4062);transform-origin:0 0;">.....</span>
<span class="t" style="left:50.00px;top:424.80px;font-size:15px;line-height:21px;color:#8a8a8a;font-family:'Liberation Sans','Noto Serif CJK SC',serif;font-weight:500;letter-spacing:-0.016px;">注释</span>
<span class="t" style="left:52.30px;top:582.15px;font-size:16.6px;line-height:23px;color:#111;font-family:'Liberation Sans','Noto Serif CJK SC',serif;font-weight:bold;transform:scaleX(1.1189);transform-origin:0 0;">程序段</span>
<span class="t" style="left:113.80px;top:579.92px;font-size:18px;line-height:24px;color:#15152a;font-family:'Liberation Serif','Noto Serif CJK SC',serif;font-weight:bold;">6</span>
<span class="t" style="left:128.30px;top:581.75px;font-size:16.6px;line-height:23px;color:#111;font-family:'Liberation Sans','Noto Serif CJK SC',serif;font-weight:bold;">：</span>
<span class="t" style="left:154.00px;top:587.58px;font-size:9px;line-height:15px;color:#9c9cb4;transform:scaleX(1.4062);transform-origin:0 0;">.....</span>
<span class="t" style="left:50.00px;top:612.70px;font-size:15px;line-height:21px;color:#8a8a8a;font-family:'Liberation Sans','Noto Serif CJK SC',serif;font-weight:500;letter-spacing:-0.016px;">注释</span>
<span class="t" style="left:85.20px;top:682.55px;font-size:14px;line-height:20px;color:#1aa0aa;font-weight:bold;letter-spacing:0.055px;">%M5.0</span>
<span class="t" style="left:86.30px;top:701.20px;font-size:15px;line-height:21px;color:#2a2a2a;letter-spacing:0.315px;font-weight:300;">&quot;启动&quot;</span>
<span class="t" style="left:216.20px;top:674.75px;font-size:14px;line-height:20px;color:#1aa0aa;font-weight:bold;letter-spacing:0.241px;">%MD100</span>
<span class="t" style="left:221.20px;top:694.45px;font-size:14px;line-height:20px;color:#333333;letter-spacing:0.234px;">&quot;Tag_5&quot;</span>
<span class="t" style="left:242.00px;top:717.14px;font-size:12px;line-height:18px;color:#333;">&gt;</span>
<span class="t" style="left:230.30px;top:734.62px;font-size:13.5px;line-height:20px;color:#1c1c28;font-weight:bold;letter-spacing:-0.255px;">Time</span>
<span class="t" style="left:230.70px;top:754.25px;font-size:14px;line-height:20px;color:#4d7ce2;letter-spacing:-0.990px;">T#0S</span>
<span class="t" style="left:354.50px;top:674.75px;font-size:14px;line-height:20px;color:#1aa0aa;font-weight:bold;letter-spacing:0.181px;">%MD100</span>
<span class="t" style="left:359.50px;top:694.45px;font-size:14px;line-height:20px;color:#333333;letter-spacing:0.318px;">&quot;Tag_5&quot;</span>
<span class="t" style="left:375.50px;top:717.14px;font-size:12px;line-height:18px;color:#333;transform:scaleX(1.2486);transform-origin:0 0;">&lt;=</span>
<span class="t" style="left:368.90px;top:734.62px;font-size:13.5px;line-height:20px;color:#1c1c28;font-weight:bold;letter-spacing:-0.255px;">Time</span>
<span class="t" style="left:369.50px;top:754.25px;font-size:14px;line-height:20px;color:#4d7ce2;letter-spacing:-0.990px;">T#3S</span>
<span class="t" style="left:639.90px;top:682.35px;font-size:14px;line-height:20px;color:#1aa0aa;font-weight:bold;letter-spacing:-0.178px;">%Q0.0</span>
<span class="t" style="left:636.20px;top:701.15px;font-size:14px;line-height:20px;color:#333333;letter-spacing:0.434px;">&quot;Tag_6&quot;</span>
<span class="t" style="left:919.00px;top:837.35px;font-size:14px;line-height:20px;color:#333;letter-spacing:0.062px;">100%</span>
<span class="t" style="left:65.00px;top:899.95px;font-size:14px;line-height:20px;color:#222;transform:scaleX(0.8876);transform-origin:0 0;">PLC_2</span>
<span class="t" style="left:209.20px;top:899.95px;font-size:14px;line-height:20px;color:#1a1a2a;font-weight:bold;letter-spacing:0.145px;">Main (OB1)</span>
<span class="t" style="left:352.00px;top:899.95px;font-size:14px;line-height:20px;color:#333;letter-spacing:0.214px;">Main (OB1)</span>
<span class="t" style="left:495.80px;top:899.19px;font-size:16.2px;line-height:22px;color:#222;letter-spacing:-0.081px;">监控表</span>
<span class="t" style="left:545.00px;top:899.95px;font-size:14px;line-height:20px;color:#222;letter-spacing:-1.078px;">_1</span>
<span class="t" style="left:68.20px;top:463.38px;font-size:14.333px;line-height:20px;color:#666666;font-family:'Liberation Mono','Noto Serif CJK SC',monospace;">1</span>
<span class="t" style="left:68.20px;top:484.38px;font-size:14.333px;line-height:20px;color:#666666;font-family:'Liberation Mono','Noto Serif CJK SC',monospace;">2</span>
<span class="t" style="left:68.20px;top:505.38px;font-size:14.333px;line-height:20px;color:#666666;font-family:'Liberation Mono','Noto Serif CJK SC',monospace;">3</span>
<span class="t" style="left:68.20px;top:526.38px;font-size:14.333px;line-height:20px;color:#666666;font-family:'Liberation Mono','Noto Serif CJK SC',monospace;">4</span>
<span class="t" style="left:96.20px;top:463.38px;font-size:14.333px;line-height:20px;color:#1818f5;font-family:'Liberation Mono','Noto Serif CJK SC',monospace;-webkit-text-stroke:0.5px #1818f5;">IF</span>
<span class="t" style="left:122.00px;top:463.38px;font-size:14.333px;line-height:20px;color:#7a7aa8;font-family:'Liberation Mono','Noto Serif CJK SC',monospace;">&quot;TIME DONE&quot;</span>
<span class="t" style="left:216.60px;top:463.38px;font-size:14.333px;line-height:20px;color:#262626;font-family:'Liberation Mono','Noto Serif CJK SC',monospace;">=</span>
<span class="t" style="left:225.20px;top:463.38px;font-size:14.333px;line-height:20px;color:#3f6fa6;font-family:'Liberation Mono','Noto Serif CJK SC',monospace;">1</span>
<span class="t" style="left:242.40px;top:463.38px;font-size:14.333px;line-height:20px;color:#1818f5;font-family:'Liberation Mono','Noto Serif CJK SC',monospace;-webkit-text-stroke:0.5px #1818f5;">THEN</span>
<span class="t" style="left:130.60px;top:484.38px;font-size:14.333px;line-height:20px;color:#7a7aa8;font-family:'Liberation Mono','Noto Serif CJK SC',monospace;">&quot;</span>
<span class="t" style="left:139.40px;top:484.38px;font-size:14.333px;line-height:20px;color:#7a7aa8;font-family:'Liberation Mono','Noto Serif CJK SC',monospace;letter-spacing:2.9px;">启动</span>
<span class="t" style="left:173.60px;top:484.38px;font-size:14.333px;line-height:20px;color:#7a7aa8;font-family:'Liberation Mono','Noto Serif CJK SC',monospace;">&quot;</span>
<span class="t" style="left:190.80px;top:484.38px;font-size:14.333px;line-height:20px;color:#262626;font-family:'Liberation Mono','Noto Serif CJK SC',monospace;">:=</span>
<span class="t" style="left:216.60px;top:484.38px;font-size:14.333px;line-height:20px;color:#3f6fa6;font-family:'Liberation Mono','Noto Serif CJK SC',monospace;">1</span>
<span class="t" style="left:225.20px;top:484.38px;font-size:14.333px;line-height:20px;color:#262626;font-family:'Liberation Mono','Noto Serif CJK SC',monospace;">;</span>
<span class="t" style="left:96.20px;top:505.38px;font-size:14.333px;line-height:20px;color:#1818f5;font-family:'Liberation Mono','Noto Serif CJK SC',monospace;-webkit-text-stroke:0.5px #1818f5;">END_IF</span>
<span class="t" style="left:147.80px;top:505.38px;font-size:14.333px;line-height:20px;color:#262626;font-family:'Liberation Mono','Noto Serif CJK SC',monospace;">;</span>
<span class="t" style="left:573.40px;top:463.38px;font-size:14.333px;line-height:20px;color:#2a2a2a;font-family:'Liberation Mono','Noto Serif CJK SC',monospace;">&quot;TIME DONE&quot;</span>
<span class="t" style="left:736.00px;top:463.38px;font-size:14.333px;line-height:20px;color:#2a2a2a;font-family:'Liberation Mono','Noto Serif CJK SC',monospace;">%M0.2</span>
<span class="t" style="left:573.40px;top:484.38px;font-size:14.333px;line-height:20px;color:#2a2a2a;font-family:'Liberation Mono','Noto Serif CJK SC',monospace;">&quot;</span>
<span class="t" style="left:582.20px;top:484.38px;font-size:14.333px;line-height:20px;color:#2a2a2a;font-family:'Liberation Mono','Noto Serif CJK SC',monospace;letter-spacing:2.9px;">启动</span>
<span class="t" style="left:616.40px;top:484.38px;font-size:14.333px;line-height:20px;color:#2a2a2a;font-family:'Liberation Mono','Noto Serif CJK SC',monospace;">&quot;</span>
<span class="t" style="left:736.00px;top:484.38px;font-size:14.333px;line-height:20px;color:#2a2a2a;font-family:'Liberation Mono','Noto Serif CJK SC',monospace;">%M5.0</span>
<span class="t" style="left:887.00px;top:861.49px;font-size:26px;line-height:32px;color:rgba(255,255,255,.9);letter-spacing:-0.203px;font-weight:500;text-shadow:1px 1px 1px rgba(60,60,60,.55);">常州智控教育</span>
<span class="t" style="left:709.30px;top:870.66px;font-size:25.5px;line-height:32px;color:#ffffff;font-weight:bold;letter-spacing:-0.116px;text-shadow:2px 2px 1px #111,1px 1px 0 #111,0 0 2px #333;font-weight:900;">头条</span>
<span class="t" style="left:769.40px;top:870.66px;font-size:25.5px;line-height:32px;color:#ffffff;transform:scaleX(1.0865);transform-origin:0 0;text-shadow:2px 2px 1px #111,1px 1px 0 #111,0 0 2px #333;">@常州智控教育plc培训</span>
<div id="leftedge" class="abs"></div>
</div>
</body>
</html>
